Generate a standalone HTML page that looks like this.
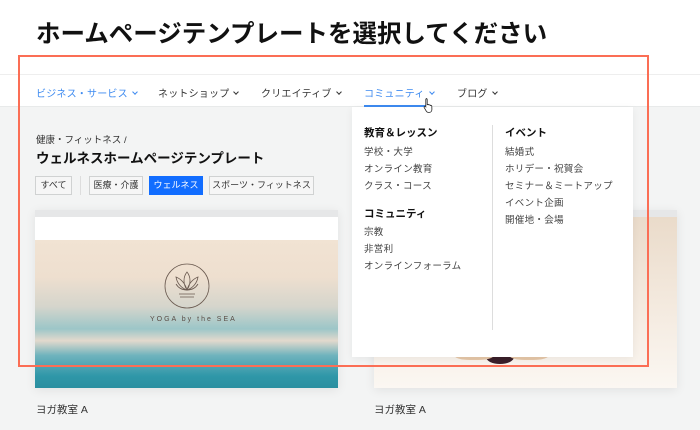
<!DOCTYPE html>
<html><head><meta charset="utf-8"><style>
*{margin:0;padding:0;box-sizing:border-box}
body{width:700px;height:430px;overflow:hidden;background:#f3f4f4;font-family:"Liberation Sans","Noto Sans CJK JP",sans-serif;color:#222;position:relative}
.abs{position:absolute;white-space:nowrap}
.top{position:absolute;left:0;top:0;width:700px;height:107px;background:#fff;border-bottom:1px solid #e8eaea}
.line{position:absolute;left:0;top:74px;width:700px;height:1px;background:#eeeeee}
h1{position:absolute;left:36px;top:15px;font-size:24.5px;font-weight:bold;letter-spacing:0;color:#111;white-space:nowrap}
.nav{font-size:10px;top:85px;color:#333;letter-spacing:0.2px}
.nav.b{color:#3d8af0}
.chev{display:inline-block;width:4px;height:4px;border-right:1px solid currentColor;border-bottom:1px solid currentColor;transform:rotate(45deg);margin-left:5px;position:relative;top:-3px}
.chip{position:absolute;top:176px;height:19px;font-size:9px;line-height:17px;text-align:center;border:1px solid #d0d2d2;background:#f6f6f6;color:#333;white-space:nowrap;overflow:hidden}
.card{position:absolute;top:210px;width:303px;height:178px;box-shadow:0 2px 10px rgba(0,0,0,.08);overflow:hidden}
.dd{position:absolute;left:352px;top:107px;width:281px;height:250px;background:#fff;box-shadow:0 2px 8px rgba(0,0,0,.06)}
.dd .h{position:absolute;font-size:10.5px;font-weight:bold;color:#111}
.dd .i{position:absolute;font-size:9.5px;color:#444;letter-spacing:0.3px}
</style></head><body>
<div class="top"></div>
<div class="line"></div>
<h1>ホームページテンプレートを選択してください</h1>
<div class="abs nav b" style="left:36px">ビジネス・サービス<span class="chev"></span></div>
<div class="abs nav" style="left:158px">ネットショップ<span class="chev"></span></div>
<div class="abs nav" style="left:261px">クリエイティブ<span class="chev"></span></div>
<div class="abs nav b" style="left:364px">コミュニティ<span class="chev"></span></div>
<div class="abs nav" style="left:457px">ブログ<span class="chev"></span></div>
<div class="abs" style="left:364px;top:105px;width:64px;height:2px;background:#3d8af0"></div>

<div class="abs" style="left:36px;top:132px;font-size:9.5px;color:#333">健康・フィットネス /</div>
<div class="abs" style="left:36px;top:147px;font-size:13.5px;font-weight:bold;color:#111">ウェルネスホームページテンプレート</div>
<div class="chip" style="left:35px;width:37px">すべて</div>
<div class="abs" style="left:80px;top:176px;width:1px;height:19px;background:#ddd"></div>
<div class="chip" style="left:89px;width:54px">医療・介護</div>
<div class="chip" style="left:149px;width:54px;background:#116dff;border-color:#116dff;color:#fff">ウェルネス</div>
<div class="chip" style="left:209px;width:105px">スポーツ・フィットネス</div>

<div class="card" style="left:35px">
 <div style="height:7px;background:#e6e7e8"></div>
 <div style="height:23px;background:#fff"></div>
 <div style="height:148px;background:linear-gradient(180deg,#f1e3d3 0%,#eedfcf 25%,#d5d5cc 45%,#9cc6c8 60%,#e3d9cd 68%,#6fb3bd 78%,#2f97a8 92%,#2a8fa0 100%)"></div>
 <svg class="abs" style="left:128px;top:52px" width="48" height="48" viewBox="0 0 48 48"><circle cx="24" cy="24" r="22" fill="none" stroke="#6a5a50" stroke-width="0.8"/><path d="M24 10c-4 5-4 12 0 18c4-6 4-13 0-18zM24 28c-6-2-10-7-11-13c5 2 9 6 11 13zM24 28c6-2 10-7 11-13c-5 2-9 6-11 13zM13 22c3 5 7 6 11 6c4 0 8-1 11-6M16 32h16M17 35h14" fill="none" stroke="#6a5a50" stroke-width="0.8"/></svg>
 <div class="abs" style="left:115px;top:106px;font-size:7px;letter-spacing:2px;color:#5a4d46">YOGA by the SEA</div>
</div>
<div class="card" style="left:374px">
 <div style="height:7px;background:#e6e7e8"></div>
 <div style="height:171px;background:linear-gradient(180deg,#eadbca,#f5ece2 60%,#fbf7f2)"></div>
 <div class="abs" style="left:112px;top:140px;width:28px;height:14px;border-radius:50%;background:#3a1f2a"></div>
 <div class="abs" style="left:80px;top:138px;width:40px;height:12px;border-radius:40%;background:#e6c7a8"></div>
 <div class="abs" style="left:135px;top:138px;width:40px;height:12px;border-radius:40%;background:#e6c7a8"></div>
</div>
<div class="abs" style="left:36px;top:402px;font-size:10.5px;color:#333">ヨガ教室 A</div>
<div class="abs" style="left:374px;top:402px;font-size:10.5px;color:#333">ヨガ教室 A</div>

<div class="dd">
 <div class="h" style="left:12px;top:18px">教育＆レッスン</div>
 <div class="i" style="left:12px;top:37px">学校・大学</div>
 <div class="i" style="left:12px;top:54px">オンライン教育</div>
 <div class="i" style="left:12px;top:71px">クラス・コース</div>
 <div class="h" style="left:12px;top:99px">コミュニティ</div>
 <div class="i" style="left:12px;top:117px">宗教</div>
 <div class="i" style="left:12px;top:134px">非営利</div>
 <div class="i" style="left:12px;top:151px">オンラインフォーラム</div>
 <div class="abs" style="left:140px;top:18px;width:1px;height:205px;background:#ddd"></div>
 <div class="h" style="left:153px;top:18px">イベント</div>
 <div class="i" style="left:153px;top:37px">結婚式</div>
 <div class="i" style="left:153px;top:54px">ホリデー・祝賀会</div>
 <div class="i" style="left:153px;top:71px">セミナー＆ミートアップ</div>
 <div class="i" style="left:153px;top:88px">イベント企画</div>
 <div class="i" style="left:153px;top:105px">開催地・会場</div>
</div>
<svg class="abs" style="left:423px;top:97px" width="12" height="16" viewBox="0 0 12 16"><path d="M3 1.5c.8 0 1.2.5 1.2 1.2v5l.6-.2c.6-.2 1.1.1 1.3.5c.5-.3 1.2-.1 1.4.5c.5-.2 1.2 0 1.3.7l.1 3.2c0 1.6-1 3-2.6 3H5.3c-.9 0-1.6-.5-2-1.2L1.2 10.6c-.3-.6 0-1.2.6-1.3c.4-.1.8.1 1 .4V2.7c0-.7.3-1.2 1-1.2z" fill="#fff" stroke="#222" stroke-width="0.8"/></svg>
<div class="abs" style="left:18px;top:55px;width:631px;height:312px;border:2px solid #fb6e55"></div>
</body></html>
